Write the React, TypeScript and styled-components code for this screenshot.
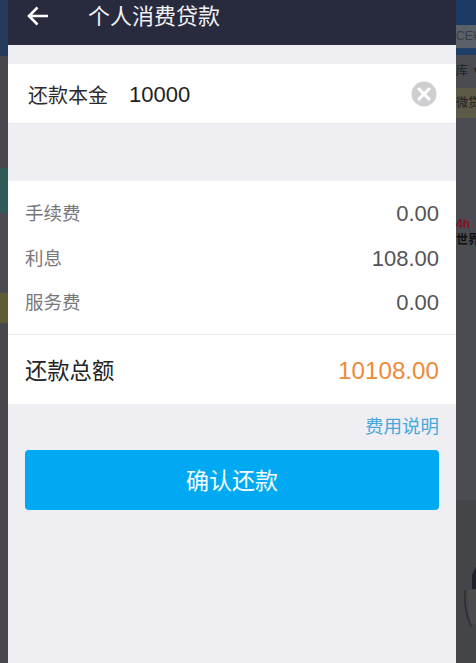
import React from 'react';
import styled, { createGlobalStyle } from 'styled-components';

const GlobalStyle = createGlobalStyle`
  html, body {
    margin: 0;
    padding: 0;
    height: 100%;
    overflow: hidden;
    background: #4a4b50;
  }
`;

const Page = styled.div`
  display: flex;
  width: 476px;
  height: 663px;
  font-family: "Liberation Sans", "Noto Sans CJK SC", sans-serif;
  overflow: hidden;
`;

const LeftGutter = styled.div`
  width: 8px;
  display: flex;
  flex-direction: column;
  background: #47484d;
`;

const RightGutter = styled.div`
  width: 20px;
  display: flex;
  flex-direction: column;
  background: #4b4c51;
  overflow: hidden;
`;

const GutterBand = styled.div<{ $h: number; $bg: string }>`
  height: ${p => p.$h}px;
  flex-shrink: 0;
  background: ${p => p.$bg};
`;

const GutterText = styled.div<{ $h: number; $bg?: string; $color?: string; $bold?: boolean }>`
  height: ${p => p.$h}px;
  flex-shrink: 0;
  line-height: ${p => p.$h}px;
  font-size: 12px;
  font-weight: ${p => (p.$bold ? 700 : 400)};
  white-space: nowrap;
  overflow: hidden;
  background: ${p => p.$bg || 'transparent'};
  color: ${p => p.$color || '#1d1d1f'};
`;

const GutterArt = styled.div`
  flex: 1;
  display: flex;
  align-items: flex-start;
  background: #434549;
`;

const Panel = styled.div`
  width: 448px;
  display: flex;
  flex-direction: column;
  background: #eeeef3;
`;

const Header = styled.header`
  height: 45px;
  flex-shrink: 0;
  display: flex;
  align-items: center;
  padding-bottom: 13px;
  box-sizing: border-box;
  background: #282a3e;
  color: #fff;
`;

const BackButton = styled.div`
  width: 60px;
  height: 32px;
  display: flex;
  align-items: center;
  padding-left: 19px;
  box-sizing: border-box;
`;

const Title = styled.div`
  margin-left: 20px;
  margin-bottom: 5px;
  font-size: 22px;
  color: #f2f2f4;
`;

const AmountRow = styled.div`
  height: 60px;
  margin-top: 19px;
  flex-shrink: 0;
  display: flex;
  align-items: center;
  padding: 0 19px 0 20px;
  background: #fff;
  border-bottom: 1px solid #e8e8ec;
  box-sizing: border-box;
`;

const AmountLabel = styled.span`
  margin-top: 2px;
  font-size: 20px;
  color: #2b2b2d;
`;

const AmountValue = styled.span`
  flex: 1;
  margin-top: 2px;
  margin-left: 21px;
  font-size: 22px;
  color: #1f1f22;
`;

const Card = styled.section`
  margin-top: 57px;
  flex-shrink: 0;
  background: #fff;
`;

const FeeList = styled.div`
  display: flex;
  flex-direction: column;
  height: 154px;
  padding: 10px 17px 0;
  box-sizing: border-box;
  border-bottom: 1px solid #ececef;
`;

const FeeRow = styled.div`
  height: 44.5px;
  display: flex;
  align-items: center;
  justify-content: space-between;
`;

const FeeLabel = styled.span`
  margin-bottom: 2px;
  font-size: 18.5px;
  color: #77777b;
`;

const FeeValue = styled.span`
  margin-top: 2px;
  font-size: 22px;
  color: #545458;
`;

const TotalRow = styled.div`
  height: 69px;
  display: flex;
  align-items: center;
  justify-content: space-between;
  padding: 0 17px;
`;

const TotalLabel = styled.span`
  margin-bottom: 2px;
  font-size: 22.3px;
  color: #242426;
`;

const TotalValue = styled.span`
  margin-top: 2px;
  font-size: 24.2px;
  color: #ef8a37;
`;

const Explain = styled.div`
  height: 46px;
  display: flex;
  align-items: center;
  justify-content: flex-end;
  padding: 0 17px 4px 0;
  box-sizing: border-box;
  font-size: 18.5px;
  color: #45a9dd;
`;

const ConfirmButton = styled.button`
  display: block;
  width: 414px;
  height: 60px;
  margin-left: 17px;
  padding: 0 0 2px;
  border: none;
  border-radius: 4px;
  background: #00a9f1;
  color: #f4fbff;
  font-family: inherit;
  font-size: 23px;
`;

const fees = [
  { label: '手续费', value: '0.00' },
  { label: '利息', value: '108.00' },
  { label: '服务费', value: '0.00' },
];

function App() {
  return (
    <Page>
      <GlobalStyle />
      <LeftGutter>
        <GutterBand $h={56} $bg="#233a5a" />
        <GutterBand $h={112} $bg="#47484d" />
        <GutterBand $h={45} $bg="#2f5a55" />
        <GutterBand $h={80} $bg="#4a4b50" />
        <GutterBand $h={30} $bg="#5f5c38" />
      </LeftGutter>
      <Panel>
        <Header>
          <BackButton>
            <svg width="22" height="20" viewBox="0 0 22 20" fill="none" stroke="#fff" strokeWidth="2.6">
              <path d="M21 10H2.5M10.5 1.5 2 10l8.5 8.5" />
            </svg>
          </BackButton>
          <Title>个人消费贷款</Title>
        </Header>
        <AmountRow>
          <AmountLabel>还款本金</AmountLabel>
          <AmountValue>10000</AmountValue>
          <svg width="26" height="26" viewBox="0 0 26 26">
            <circle cx="13" cy="13" r="12.5" fill="#cfcfd1" />
            <path d="M8 8l10 10M18 8 8 18" stroke="#fff" strokeWidth="3" strokeLinecap="round" />
          </svg>
        </AmountRow>
        <Card>
          <FeeList>
            {fees.map(fee => (
              <FeeRow key={fee.label}>
                <FeeLabel>{fee.label}</FeeLabel>
                <FeeValue>{fee.value}</FeeValue>
              </FeeRow>
            ))}
          </FeeList>
          <TotalRow>
            <TotalLabel>还款总额</TotalLabel>
            <TotalValue>10108.00</TotalValue>
          </TotalRow>
        </Card>
        <Explain>费用说明</Explain>
        <ConfirmButton>确认还款</ConfirmButton>
      </Panel>
      <RightGutter>
        <GutterBand $h={25} $bg="#1c3a63" />
        <GutterText $h={23} $bg="#5b6069" $color="#3a3d44">CE¥</GutterText>
        <GutterBand $h={7} $bg="#1f3f68" />
        <GutterText $h={33} $color="#222">库 ▼</GutterText>
        <GutterText $h={30} $bg="#5d5a48">微贷</GutterText>
        <GutterBand $h={98} $bg="#4b4c51" />
        <GutterText $h={16} $color="#7d1420" $bold>4h</GutterText>
        <GutterText $h={16} $color="#111" $bold>世界</GutterText>
        <GutterBand $h={252} $bg="#4b4c51" />
        <GutterArt>
          <svg width="20" height="159" viewBox="0 0 20 159" fill="none">
            <path d="M16 75l4-8v22h-4z" fill="#1f2228" />
            <path d="M9 90c-1 14 1 26 6 36" stroke="#2d2e32" strokeWidth="1.5" />
            <path d="M12 90h8v34h-5c-2-10-3-22-3-34z" fill="#4d4c4d" />
          </svg>
        </GutterArt>
      </RightGutter>
    </Page>
  );
}

export default App;
